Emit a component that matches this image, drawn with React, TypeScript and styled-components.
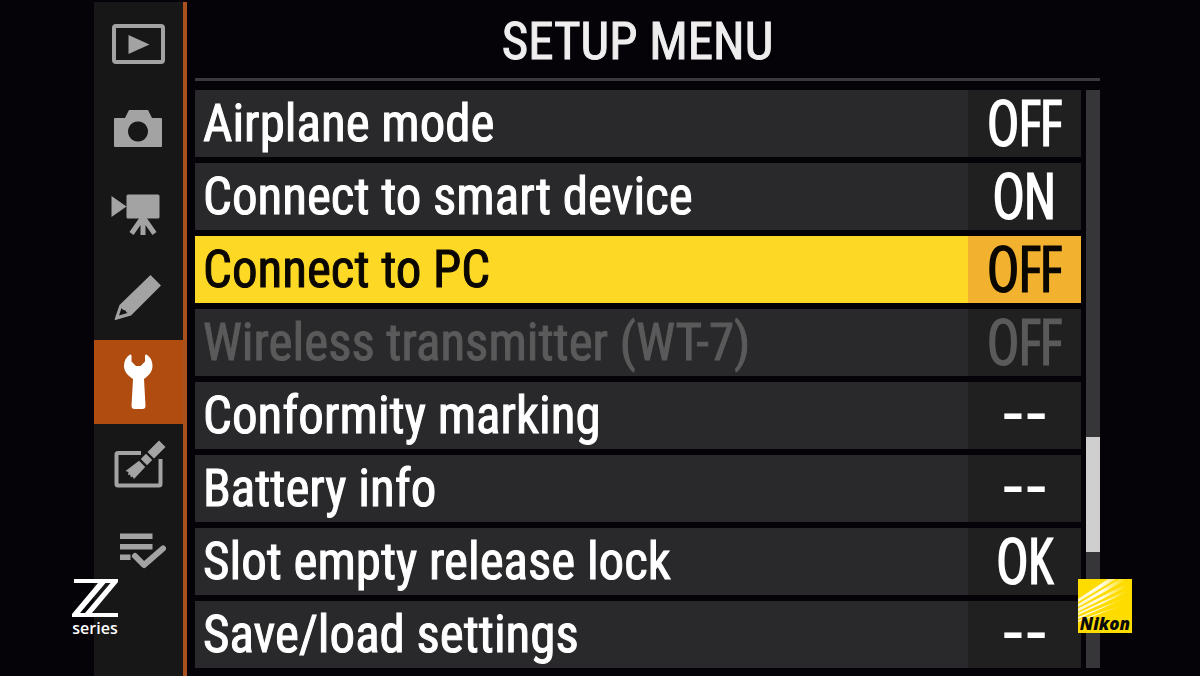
import React from "react";
import styled, { createGlobalStyle } from "styled-components";

const Global = createGlobalStyle`
  body { margin: 0; background: #050208; }
  * { box-sizing: border-box; }
`;

const labelFont = `"Roboto Condensed", "Liberation Sans", sans-serif`;
const valueFont = `"Open Sans Condensed Light", "Roboto Condensed", "Liberation Sans", sans-serif`;

const Screen = styled.div`
  position: relative;
  display: flex;
  min-height: 100vh;
  padding: 0 100px 0 94px;
  background: #050208;
  overflow: hidden;
`;

const Sidebar = styled.nav`
  flex: none;
  width: 93px;
  margin-top: 2px;
  padding-top: 2px;
  display: flex;
  flex-direction: column;
  background: #171717;
  border-right: 4px solid #a9501f;
`;

const Tab = styled.button<{ $active?: boolean }>`
  display: flex;
  align-items: center;
  justify-content: center;
  height: 84px;
  padding: 0;
  border: 0;
  background: ${(p) => (p.$active ? "#b04c10" : "transparent")};
  color: ${(p) => (p.$active ? "#fff" : "#a3a3a3")};
  cursor: pointer;
`;

const Glyph = styled.svg`
  display: block;
  width: 61px;
  height: 60px;
`;

const Main = styled.main`
  flex: 1;
  min-width: 0;
  margin-left: 8px;
`;

const Title = styled.h1`
  margin: 0 0 9px;
  height: 81px;
  padding-right: 20px;
  border-bottom: 3px solid #3b393d;
  font: 400 51px/84px ${labelFont};
  -webkit-text-stroke: 1px currentColor;
  text-align: center;
  color: #eee;
`;

const Body = styled.div`
  display: flex;
  gap: 5px;
`;

const List = styled.ul`
  flex: 1;
  min-width: 0;
  margin: 0;
  padding: 0;
  list-style: none;
  display: flex;
  flex-direction: column;
  gap: 6px;
`;

type Tone = "normal" | "selected" | "disabled";
const tones = {
  normal: { fg: "#fff", bg: "#29292b", cell: "#202021" },
  selected: { fg: "#0a0600", bg: "#fdd925", cell: "#f2b22f" },
  disabled: { fg: "#5a5a5b", bg: "#29292b", cell: "#202021" },
};

const Row = styled.button<{ $tone: Tone }>`
  display: flex;
  width: 100%;
  height: 67px;
  padding: 0;
  border: 0;
  text-align: left;
  color: ${(p) => tones[p.$tone].fg};
  background: ${(p) => tones[p.$tone].bg};
`;

const Label = styled.span`
  flex: 1;
  min-width: 0;
  padding-left: 8px;
  font: 400 51px/68px ${labelFont};
  -webkit-text-stroke: 1px currentColor;
  white-space: nowrap;
`;

const Value = styled.span<{ $tone: Tone }>`
  flex: none;
  width: 113px;
  font: 400 60px/64px ${valueFont};
  -webkit-text-stroke: 3px currentColor;
  text-align: center;
  background: ${(p) => tones[p.$tone].cell};
`;

const Dashes = styled(Value)`
  font: 400 70px/58px "Liberation Sans", sans-serif;
  -webkit-text-stroke: 0;
`;

const Track = styled.div`
  flex: none;
  width: 14px;
  display: flex;
  flex-direction: column;
  background: #363537;
`;

const Thumb = styled.div`
  margin-top: 347px;
  height: 115px;
  background: #cfcfcf;
`;

const ZMark = styled.div`
  position: absolute;
  left: 72px;
  bottom: 37px;
  display: flex;
  flex-direction: column;
  font: 600 16px/22px "Open Sans", sans-serif;
  text-align: center;
  color: #fff;
`;

const ZLogo = styled.svg`
  display: block;
  width: 46px;
  height: 38px;
`;

const NikonMark = styled.div`
  position: absolute;
  right: 68px;
  bottom: 43px;
  width: 54px;
  height: 54px;
`;

const Rays = styled.svg`
  display: block;
  width: 54px;
  height: 54px;
`;

const NikonName = styled.span`
  position: absolute;
  left: 0;
  right: 0;
  bottom: 0;
  font: italic 800 17px/18px "Open Sans", sans-serif;
  text-align: center;
  color: #0a0a0a;
`;

const brush =
  "M51 4.500 L57.500 11 L46 22.500 L39.500 16 Z M38 17.800 L44.200 24 L39 29.200 L32.800 23 Z M31 24.800 L37.200 31 L26 43 L24.500 40.500 L23 41.500 L22 38.500 L20 39 L20.500 36 L17.500 35 Z";

const tabs: { name: string; art: React.ReactNode }[] = [
  {
    name: "Playback",
    art: (
      <>
        <rect x="6" y="10" width="49" height="36" rx="2" fill="none" stroke="currentColor" strokeWidth="4" />
        <path d="M20.5 19 V38 L41.500 28.500 Z" fill="currentColor" />
      </>
    ),
  },
  {
    name: "Photo shooting",
    art: (
      <path
        fillRule="evenodd"
        fill="currentColor"
        d="M7 18 H17 L21 10 H40 L44 18 H53 Q54 18 54 19 V46 Q54 47 53 47 H7 Q6 47 6 46 V19 Q6 18 7 18 Z M30 21.500 a10 10 0 1 0 .01 0 Z"
      />
    ),
  },
  {
    name: "Movie shooting",
    art: (
      <>
        <path d="M3.500 12 L18.500 22.500 L3.500 33 Z M20 10.500 H50 Q51.500 10.500 51.500 12 V33 Q51.500 34.500 50 34.500 H20 Q18.500 34.500 18.500 33 V12 Q18.500 10.500 20 10.500 Z" fill="currentColor" />
        <path d="M35 33 L23.500 49.500 M35 33 V51 M35 33 L46.500 49.500" fill="none" stroke="currentColor" strokeWidth="5" />
      </>
    ),
  },
  {
    name: "Custom settings",
    art: (
      <path
        fillRule="evenodd"
        fill="currentColor"
        d="M42.500 7 L53 17.500 L23 47.500 L7.500 52 Q6.500 52 6.700 51 L11.500 37 Z M13.500 40 L11 47.500 L19.500 45 Q18 44 17.500 42.500 Q14.500 42 13.500 40 Z"
      />
    ),
  },
  {
    name: "Setup",
    art: (
      <path
        fill="currentColor"
        d="M22 2.500 Q23.500 2 23.500 4 V9.500 L28 14 H32.500 L37 9.500 V4 Q37 2 38.500 2.500 C42.500 5 44.500 9 44.500 14 C44.500 19 41.500 23 36 27 L37.500 54 Q37.500 57 34.500 57 H26.500 Q23.500 57 23.500 54 L25 27 C19 23 16 19 16 14 C16 9 18 5 22 2.500 Z"
      />
    ),
  },
  {
    name: "Retouch",
    art: (
      <>
        <path d="M33 17 H10 Q8.500 17 8.500 18.500 V48 Q8.500 49.500 10 49.500 H51 Q52.500 49.500 52.500 48 V23" fill="none" stroke="currentColor" strokeWidth="4" />
        <path d={brush} fill="none" stroke="#171717" strokeWidth="3" />
        <path d={brush} fill="currentColor" />
      </>
    ),
  },
  {
    name: "My menu",
    art: (
      <>
        <path d="M12 13.500 H44.500 V19 H12 Z M12 24 H44.500 V29.500 H12 Z M12 34.500 H22.500 V40 H12 Z" fill="currentColor" />
        <path d="M27 36 L36 45 L55 28.500" fill="none" stroke="#171717" strokeWidth="9" />
        <path d="M27 36 L36 45 L55 28.500" fill="none" stroke="currentColor" strokeWidth="6" strokeLinecap="round" strokeLinejoin="round" />
      </>
    ),
  },
];

const items: { label: string; value: string; tone?: Tone }[] = [
  { label: "Airplane mode", value: "OFF" },
  { label: "Connect to smart device", value: "ON" },
  { label: "Connect to PC", value: "OFF", tone: "selected" },
  { label: "Wireless transmitter (WT-7)", value: "OFF", tone: "disabled" },
  { label: "Conformity marking", value: "--" },
  { label: "Battery info", value: "--" },
  { label: "Slot empty release lock", value: "OK" },
  { label: "Save/load settings", value: "--" },
];

export default function App() {
  return (
    <Screen>
      <Global />
      <Sidebar aria-label="Menus">
        {tabs.map((tab) => (
          <Tab key={tab.name} aria-label={tab.name} $active={tab.name === "Setup"}>
            <Glyph viewBox="0 0 61 60" aria-hidden="true">{tab.art}</Glyph>
          </Tab>
        ))}
      </Sidebar>
      <Main>
        <Title>SETUP MENU</Title>
        <Body>
          <List>
            {items.map(({ label, value, tone = "normal" }) => {
              const Cell = value === "--" ? Dashes : Value;
              return (
                <li key={label}>
                  <Row $tone={tone} disabled={tone === "disabled"}>
                    <Label>{label}</Label>
                    <Cell $tone={tone}>{value}</Cell>
                  </Row>
                </li>
              );
            })}
          </List>
          <Track>
            <Thumb />
          </Track>
        </Body>
      </Main>
      <ZMark>
        <ZLogo viewBox="0 0 46 38" aria-hidden="true">
          <path
            fill="#fff"
            fillRule="evenodd"
            d="M2 0 H46 V3 L20 34 H46 V38 H0 V35 L26 4 H2 Z M33.500 4 L8 34 H13 L38.500 4 Z"
          />
        </ZLogo>
        series
      </ZMark>
      <NikonMark>
        <Rays viewBox="0 0 54 54" aria-hidden="true">
          <defs>
            <linearGradient id="ray" gradientUnits="userSpaceOnUse" x1="0" y1="0" x2="48" y2="0">
              <stop offset="0" stopColor="#fff" stopOpacity="0.8" />
              <stop offset="0.5" stopColor="#fff" stopOpacity="0.9" />
              <stop offset="1" stopColor="#fff" stopOpacity="0" />
            </linearGradient>
          </defs>
          <rect width="54" height="54" fill="#ffdc00" />
          <path
            fill="url(#ray)"
            d="M0 20 L30 0 H38 L0 23 Z M0 25 L42 0 H49 L0 28 Z M0 29.500 L54 2 V5 L0 32.500 Z M0 34 L54 9 V11 L0 36 Z M0 38 L50 18 L0 40 Z M0 41.500 L45 26 L0 43 Z"
          />
        </Rays>
        <NikonName>Nikon</NikonName>
      </NikonMark>
    </Screen>
  );
}
